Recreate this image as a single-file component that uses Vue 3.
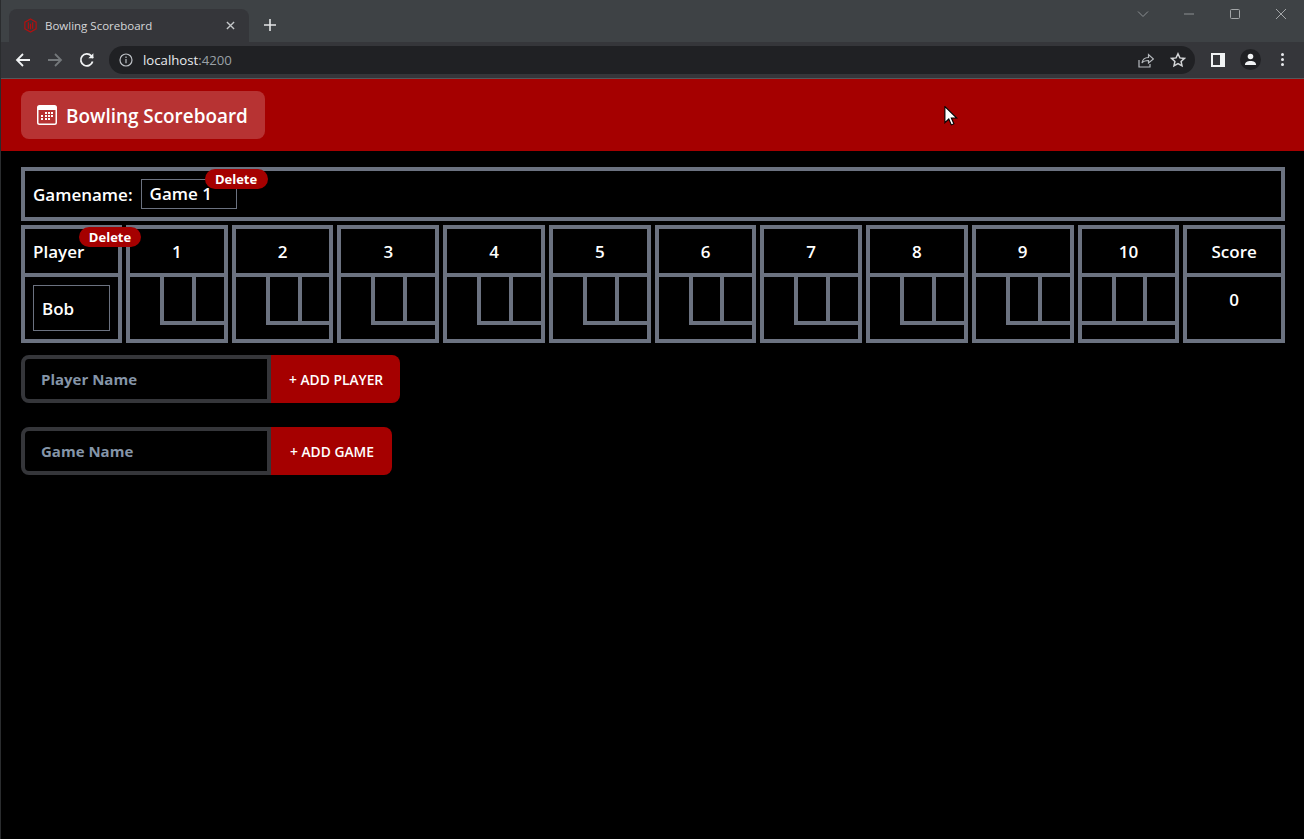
<script setup>
import { ref } from 'vue'

const frames = ref([1, 2, 3, 4, 5, 6, 7, 8, 9, 10])
const gameName = ref('Game 1')
const playerName = ref('Bob')
</script>

<template>
  <div class="window">
    <div class="tab-strip">
      <div class="tab">
        <svg class="favicon" viewBox="0 0 16 16" fill="none" stroke="#b01010" stroke-width="1.3">
          <path d="M8 1l6 3.4v7.2L8 15l-6-3.4V4.4z" />
          <path d="M5.700 4.500v7M8 6v6M10.300 4.500v7" />
        </svg>
        <span class="tab-title">Bowling Scoreboard</span>
        <svg class="tab-close" viewBox="0 0 10 10" stroke="#c4c7c9" stroke-width="1.5">
          <path d="M1 1l8 8M9 1l-8 8" />
        </svg>
      </div>
      <svg class="new-tab" viewBox="0 0 12 12" stroke="#e3e5e6" stroke-width="1.6">
        <path d="M6 0v12M0 6h12" />
      </svg>
      <div class="window-controls">
        <svg viewBox="0 0 12 12" fill="none" stroke="#8b8f92"><path d="M1 3.500l5 5 5-5" /></svg>
        <svg viewBox="0 0 12 12" fill="none" stroke="#8b8f92"><path d="M1 6h10" /></svg>
        <svg viewBox="0 0 12 12" fill="none" stroke="#a3a6a8"><rect x="1.500" y="1.500" width="9" height="9" rx="1" /></svg>
        <svg viewBox="0 0 12 12" fill="none" stroke="#a3a6a8"><path d="M1 1l10 10M11 1L1 11" /></svg>
      </div>
    </div>

    <div class="toolbar">
      <svg class="nav-icon" viewBox="0 0 16 16" fill="none" stroke="#f1f3f4" stroke-width="1.8"><path d="M15 8H2M8 2L2 8l6 6" /></svg>
      <svg class="nav-icon" viewBox="0 0 16 16" fill="none" stroke="#74787b" stroke-width="1.8"><path d="M1 8h13M8 2l6 6-6 6" /></svg>
      <svg class="nav-icon" viewBox="0 0 16 16" fill="none" stroke="#f1f3f4" stroke-width="1.8">
        <path d="M13.600 9.500a6 6 0 1 1-1.300-5.600L14 6" />
        <path d="M14.400 1.200v5h-5" fill="#f1f3f4" stroke="none" />
      </svg>
      <div class="address-bar">
        <svg class="info-icon" viewBox="0 0 14 14" fill="none" stroke="#bdc1c6" stroke-width="1.2">
          <circle cx="7" cy="7" r="6" />
          <path d="M7 6v4.200M7 3.600v1.300" />
        </svg>
        <span class="url">localhost<span class="port">:4200</span></span>
        <svg class="share-icon" viewBox="0 0 16 16" fill="none" stroke="#b6babe" stroke-width="1.2">
          <path d="M1 8v7h11v-3" />
          <path d="M4 11c.5-3.500 3-5.500 6.500-5.500V2.500L15.500 7l-5 4V8.500C8 8.500 5.500 9 4 11z" />
        </svg>
        <svg class="star-icon" viewBox="0 0 16 16" fill="none" stroke="#d3d5d7" stroke-width="1.5">
          <path d="M8 1.800l1.900 4.100 4.500.5-3.300 3 .9 4.400L8 11.600 4 13.800l.9-4.400-3.300-3 4.500-.5z" />
        </svg>
      </div>
      <div class="side-panel"><span></span></div>
      <div class="avatar">
        <svg viewBox="0 0 14 14" fill="#f1f3f4"><circle cx="7" cy="3.800" r="3" /><path d="M1 13c0-3 2.500-4.300 6-4.300s6 1.300 6 4.300z" /></svg>
      </div>
      <div class="kebab"><i></i><i></i><i></i></div>
    </div>

    <nav class="navbar">
      <a class="brand">
        <svg class="brand-icon" viewBox="0 0 20 20">
          <path fill="#fff" fill-rule="evenodd" d="M2.500 0h15A2.500 2.500 0 0 1 20 2.500v15a2.500 2.500 0 0 1-2.500 2.500h-15A2.500 2.500 0 0 1 0 17.500v-15A2.500 2.500 0 0 1 2.500 0zM1.500 5v12.500c0 .6.400 1 1 1h15c.6 0 1-.4 1-1V5z" />
          <g fill="#fff">
            <rect x="8" y="7" width="2" height="2" /><rect x="11" y="7" width="2" height="2" /><rect x="14" y="7" width="2" height="2" />
            <rect x="4" y="10" width="2" height="2" /><rect x="8" y="10" width="2" height="2" /><rect x="11" y="10" width="2" height="2" /><rect x="14" y="10" width="2" height="2" />
            <rect x="4" y="13" width="2" height="2" /><rect x="8" y="13" width="2" height="2" /><rect x="11" y="13" width="2" height="2" />
          </g>
        </svg>
        <span class="brand-text">Bowling Scoreboard</span>
      </a>
    </nav>

    <main class="content">
      <div class="game-box">
        <label class="game-label">Gamename:</label>
        <div class="game-input-wrap">
          <div class="game-input">{{ gameName }}</div>
          <button class="delete-badge">Delete</button>
        </div>
      </div>

      <div class="board">
        <div class="cell">
          <div class="cell-head player-head">
            Player
            <button class="delete-badge player-delete">Delete</button>
          </div>
          <div class="cell-body player-body">
            <div class="player-input">{{ playerName }}</div>
          </div>
        </div>

        <div v-for="frame in frames" :key="frame" class="cell">
          <div class="cell-head">{{ frame }}</div>
          <div class="cell-body frame-body" :class="{ tenth: frame === 10 }">
            <div class="roll"></div>
            <div class="roll"></div>
            <div class="roll"></div>
          </div>
        </div>

        <div class="cell">
          <div class="cell-head">Score</div>
          <div class="cell-body score-body">0</div>
        </div>
      </div>

      <form class="add-form" @submit.prevent>
        <input class="add-input" placeholder="Player Name" />
        <button class="add-btn">+ Add Player</button>
      </form>
      <form class="add-form" @submit.prevent>
        <input class="add-input" placeholder="Game Name" />
        <button class="add-btn add-game">+ Add Game</button>
      </form>
    </main>

    <svg class="cursor" viewBox="0 0 12 18">
      <path d="M.5.500v14.500l3.500-3.300 2.300 5.300 2.300-1-2.300-5.200h4.900z" fill="#fff" stroke="#000" stroke-width="1" />
    </svg>
  </div>
</template>

<style scoped>
.window {
  position: relative;
  height: 839px;
  overflow: hidden;
  background: #000;
  color: #fff;
  font-family: "Open Sans", "Noto Sans", sans-serif;
  border-left: 1px solid #2a2c2e;
  box-sizing: border-box;
}

/* browser chrome */
.tab-strip {
  height: 42px;
  background: #3e4245;
  display: flex;
  align-items: flex-end;
  padding-left: 8px;
}
.tab {
  width: 240px;
  height: 33px;
  background: #35363a;
  border-radius: 8px 8px 0 0;
  display: flex;
  align-items: center;
  padding: 0 14px;
  box-sizing: border-box;
}
.favicon { width: 15px; height: 15px; }
.tab-title {
  margin-left: 7px;
  font-size: 11.500px;
  color: #d5d7d9;
  flex: 1;
}
.tab-close { width: 9px; height: 9px; }
.new-tab { width: 12px; height: 12px; margin: 0 0 11px 15px; }
.window-controls {
  margin-left: auto;
  align-self: flex-start;
  display: flex;
  gap: 34px;
  padding: 8px 17px 0 0;
}
.window-controls svg { width: 12px; height: 12px; }
.toolbar {
  height: 37px;
  box-sizing: border-box;
  padding: 0 0 1px 14px;
  background: #35363a;
  border-bottom: 1px solid #54595c;
  display: flex;
  align-items: center;
}
.nav-icon { width: 16px; height: 16px; margin-right: 16px; }
.address-bar {
  width: 1086px;
  height: 28px;
  margin-left: -2px;
  background: #202124;
  border-radius: 14px;
  display: flex;
  align-items: center;
  padding: 0 9px 0 10px;
  box-sizing: border-box;
}
.info-icon { width: 14px; height: 14px; }
.url { margin-left: 10px; font-size: 13.200px; color: #e8eaed; flex: 1; }
.port { color: #9aa0a6; }
.share-icon { width: 16px; height: 16px; margin-right: 16px; }
.star-icon { width: 16px; height: 16px; }
.side-panel {
  width: 14px;
  height: 14px;
  margin-left: 16px;
  background: #f1f3f4;
  display: flex;
  align-items: center;
  padding: 2px;
  box-sizing: border-box;
}
.side-panel span { width: 7px; height: 10px; background: #35363a; }
.avatar {
  width: 21px;
  height: 21px;
  margin-left: 15px;
  border-radius: 50%;
  background: #202124;
  display: flex;
  align-items: center;
  justify-content: center;
}
.avatar svg { width: 13px; height: 13px; }
.kebab {
  margin-left: 20px;
  display: flex;
  flex-direction: column;
  gap: 2px;
}
.kebab i { width: 3px; height: 3px; border-radius: 50%; background: #e8eaed; display: block; }

/* app */
.navbar {
  height: 72px;
  background: #a50000;
  display: flex;
  align-items: center;
  padding-left: 20px;
}
.brand {
  height: 48px;
  display: flex;
  align-items: center;
  gap: 9px;
  padding: 0 17px 0 16px;
  background: rgba(255, 255, 255, 0.2);
  border-radius: 8px;
  font-size: 18.900px;
  font-weight: 600;
}
.brand-icon { width: 20px; height: 20px; }
.brand-text { position: relative; top: 1px; }

.content {
  padding: 16px 19px 0 20px;
}
.game-box {
  height: 54px;
  box-sizing: border-box;
  border: 4px solid #6b7280;
  display: flex;
  align-items: center;
  padding-left: 8px;
  font-weight: 600;
  font-size: 17px;
}
.game-input-wrap { position: relative; margin-left: 8px; }
.game-input {
  width: 96px;
  height: 30px;
  box-sizing: border-box;
  border: 1px solid #6b7280;
  padding-left: 8px;
  line-height: 28px;
}
.delete-badge {
  position: absolute;
  top: -10px;
  left: 64px;
  width: 63px;
  height: 20px;
  padding: 0;
  border: none;
  border-radius: 10px;
  background: #a50000;
  color: #fff;
  font-family: inherit;
  font-size: 13px;
  font-weight: 700;
}

.board {
  display: grid;
  grid-template-columns: 101px repeat(11, 1fr);
  gap: 4px;
  margin-top: 4px;
}
.cell {
  height: 118px;
  box-sizing: border-box;
  border: 4px solid #6b7280;
  display: flex;
  flex-direction: column;
  font-size: 17px;
  font-weight: 600;
}
.cell-head {
  position: relative;
  height: 48px;
  box-sizing: border-box;
  border-bottom: 4px solid #6b7280;
  display: flex;
  align-items: center;
  justify-content: center;
}
.player-head { justify-content: flex-start; padding-left: 8px; }
.player-delete { top: -2px; left: 54px; width: 62px; }
.cell-body { flex: 1; }
.player-body { padding: 8px; }
.player-input {
  width: 77px;
  height: 46px;
  box-sizing: border-box;
  border: 1px solid #6b7280;
  padding-left: 8px;
  line-height: 46px;
}
.score-body { text-align: center; padding-top: 10px; line-height: 26px; }

.frame-body {
  display: grid;
  grid-template-columns: 30px 1fr 1fr;
}
.roll {
  height: 48px;
  box-sizing: border-box;
}
.roll + .roll {
  border-left: 4px solid #6b7280;
  border-bottom: 4px solid #6b7280;
}
.tenth .roll { border-bottom: 4px solid #6b7280; }

.add-form {
  display: flex;
  height: 48px;
  margin-top: 12px;
}
.add-form + .add-form { margin-top: 24px; }
.add-input {
  width: 250px;
  height: 48px;
  box-sizing: border-box;
  background: #000;
  border: 4px solid #35363a;
  border-radius: 8px 0 0 8px;
  padding: 0 16px;
  color: #fff;
  font-family: inherit;
  font-size: 15px;
  font-weight: 700;
  outline: none;
}
.add-input::placeholder { color: #8595a8; opacity: 1; }
.add-btn {
  height: 48px;
  padding: 0 17px 0 18px;
  border: none;
  border-radius: 0 8px 8px 0;
  background: #a50000;
  color: #fff;
  font-family: inherit;
  font-size: 13.800px;
  font-weight: 600;
  text-transform: uppercase;
}
.add-game { width: 121px; }

.cursor {
  position: absolute;
  left: 943px;
  top: 106px;
  width: 14px;
  height: 20px;
}
</style>

<style>
html, body { background: #000; overflow: hidden; }
</style>
